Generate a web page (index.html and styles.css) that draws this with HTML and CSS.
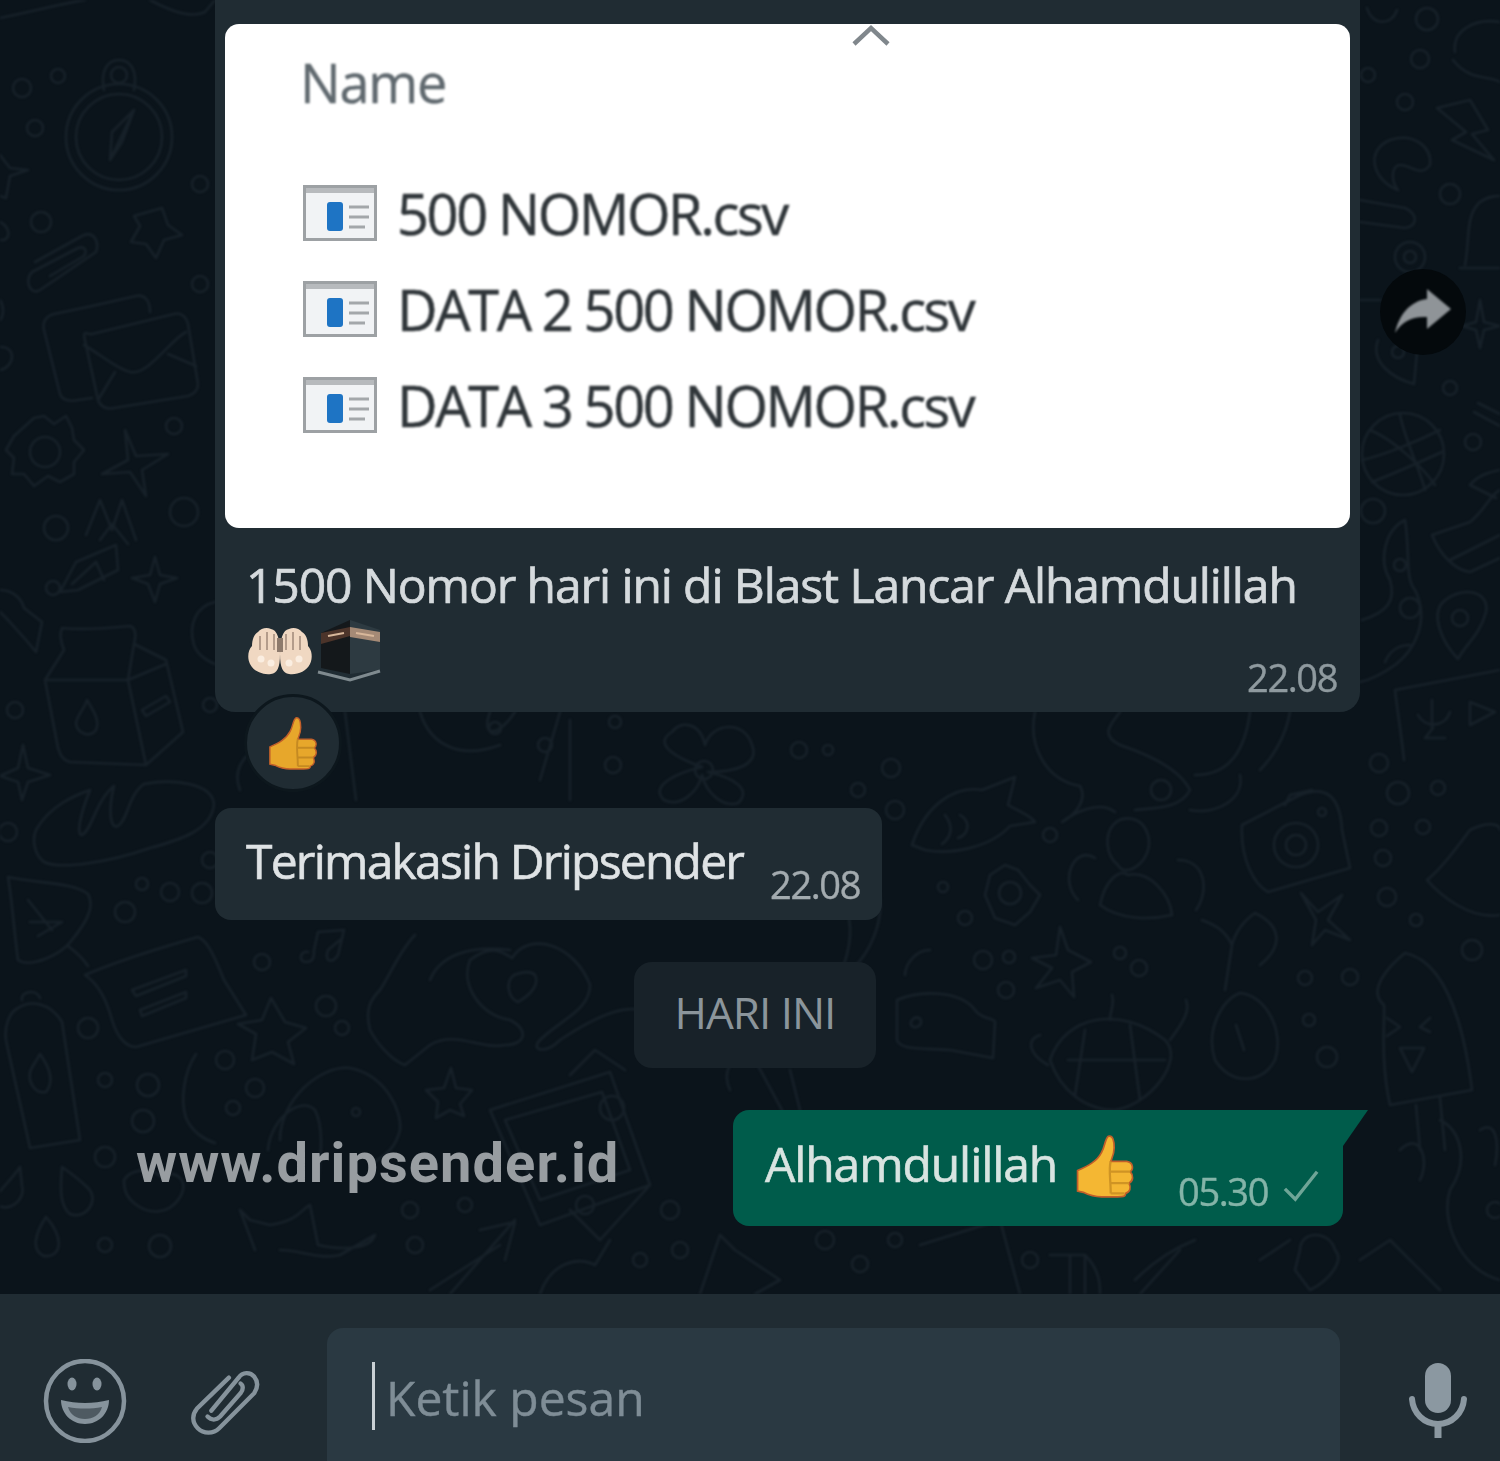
FILE: index.html
```html
<!DOCTYPE html>
<html lang="id">
<head>
<meta charset="utf-8">
<title>Dripsender chat</title>
<link rel="stylesheet" href="styles.css">
</head>
<body>
<div class="page">
  <main class="chat">
    <svg class="wallpaper" viewBox="0 0 1500 1294" width="1500" height="1294" fill="none" stroke="#172129" stroke-width="2.6" stroke-linecap="round" stroke-linejoin="round" aria-hidden="true">
      <!-- left column, top -->
      <path d="M0 18C30 12 60 4 85 0M150 0C165 8 190 20 205 12L215 0"/>
      <circle cx="119" cy="137" r="53"/><circle cx="119" cy="137" r="43"/><path d="M104 90C100 70 108 60 119 60S138 70 134 90"/><circle cx="119" cy="75" r="8"/>
      <path d="M134 110L110 160L112 132ZM134 110L122 142L110 160"/>
      <circle cx="22" cy="88" r="9"/><circle cx="58" cy="76" r="7"/><circle cx="35" cy="128" r="8"/><circle cx="200" cy="184" r="8"/><circle cx="41" cy="222" r="10"/><circle cx="200" cy="284" r="8"/>
      <path d="M0 155L10 168L28 170L10 176L6 198L0 196M0 222C8 226 12 236 4 240L0 240M0 300C4 306 4 316 0 320M0 347C16 346 16 366 0 370"/>
      <path d="M162 208L168 225L182 235L164 240L156 258L146 244L131 242L140 226L134 216Z"/>
      <path d="M35 262L82 236C92 230 100 240 96 252L40 290C30 296 24 280 32 272L78 248C84 246 88 250 84 256L50 276"/>
      <path d="M92 306L54 314C46 316 42 322 44 330L60 394C62 400 70 402 78 400L92 398M92 306L136 296C144 294 150 300 150 312"/>
      <path d="M92 334L174 314C180 312 186 316 188 324L198 384C198 390 194 394 188 396L114 408C106 410 100 406 98 400L84 336C84 330 88 335 92 334ZM84 345C100 354 115 368 130 372C148 376 170 340 186 332M115 372L98 400M168 354L196 366"/>
      <path d="M34 418L44 416L54 424L66 416L72 428L74 440L84 450L74 462L74 474L60 482L48 476L34 486L24 474L12 474L14 458L6 450L14 436Z"/><circle cx="45" cy="452" r="15"/><circle cx="174" cy="426" r="8"/>
      <path d="M125 430L136 456L168 454L142 470L146 496L130 472L102 474L128 460Z"/>
      <circle cx="184" cy="512" r="14"/><path d="M86 535L100 500L112 530L122 500L136 540M100 540L112 524L128 544"/><circle cx="56" cy="528" r="12"/>
      <path d="M60 592L76 562L116 545L118 570L78 590ZM72 584L96 562L104 580"/><circle cx="53" cy="588" r="7"/>
      <path d="M155 557L160 575L177 578L160 584L155 602L148 584L132 578L150 575Z"/>
      <path d="M0 590C14 590 22 600 24 608L42 622L36 652L26 640L8 620L0 612"/>
      <path d="M215 602C196 606 188 625 194 645C198 658 215 664 215 664"/><circle cx="210" cy="705" r="7"/>
      <!-- milk carton -->
      <path d="M62 628C80 630 110 628 130 626C136 628 136 636 134 644L166 660L183 732L146 765L70 762C62 760 60 754 58 748L45 680L64 650C60 640 60 632 62 628Z"/><path d="M45 680H128L134 644M128 680L146 765M128 680L166 664M142 710L166 696L170 702L146 716Z"/>
      <path d="M87 700C94 712 100 720 96 730C90 738 78 734 76 724C76 716 84 710 87 700Z"/><circle cx="15" cy="710" r="8"/>
      <path d="M23 745L28 768L50 775L28 782L22 800L18 782L0 776L18 768Z"/><circle cx="8" cy="832" r="9"/>
      <path d="M36 830C50 805 76 795 90 790C80 815 76 835 82 835C92 830 96 800 114 786C108 810 110 830 118 826C128 820 128 795 144 784C176 778 212 784 214 804C212 830 180 840 150 848C110 862 60 870 44 862C34 854 32 840 36 830Z"/>
      <circle cx="210" cy="860" r="8"/><circle cx="142" cy="884" r="6"/><circle cx="170" cy="892" r="9"/><circle cx="202" cy="893" r="10"/><circle cx="125" cy="912" r="10"/>
      <path d="M8 877C40 884 72 882 88 894C96 908 84 925 72 940C60 956 30 968 18 960C14 930 12 900 8 877ZM28 900L52 930M30 922H60M38 936L62 922M68 946C76 952 84 960 88 966"/>
      <path d="M85 975C120 960 170 945 198 937C206 940 212 950 224 980L246 1015L136 1047C128 1047 118 1040 112 1020C108 1005 100 985 85 975Z"/><path d="M132 990L186 970L186 976L136 996ZM140 1010L186 992L186 998L142 1016Z"/>
      <path d="M22 1000C20 992 36 988 40 998M18 1008C30 1000 50 1002 62 1022L80 1140L30 1148C24 1120 10 1060 6 1040C4 1025 10 1012 18 1008Z"/><path d="M40 1054C50 1068 54 1082 46 1092C36 1094 28 1084 30 1072C32 1066 36 1062 40 1054Z"/>
      <circle cx="88" cy="1028" r="10"/><circle cx="105" cy="1080" r="7"/><circle cx="148" cy="1085" r="11"/><circle cx="143" cy="1121" r="11"/><circle cx="105" cy="1157" r="10"/>
      <path d="M196 1054C184 1072 180 1100 186 1118C192 1132 205 1140 215 1143"/>
      <path d="M20 1167C8 1185 -8 1195 -4 1204C8 1214 26 1200 22 1186ZM62 1167C60 1190 60 1206 70 1214C86 1220 100 1200 88 1188C80 1180 72 1174 62 1167ZM46 1217C36 1232 30 1250 44 1256C60 1258 66 1240 46 1217Z"/>
      <circle cx="105" cy="1245" r="7"/><circle cx="160" cy="1246" r="11"/>
      <path d="M124 1180C130 1170 150 1166 160 1176C176 1168 192 1182 178 1200C168 1214 150 1214 138 1206C126 1198 124 1190 124 1180Z"/>
      <!-- below the first bubble -->
      <path d="M240 790C232 770 244 755 258 748M345 712L356 800M420 712C430 745 460 760 500 745M490 712C480 740 500 735 515 712M560 712L540 780M570 720V800"/>
      <circle cx="495" cy="728" r="6"/><circle cx="545" cy="745" r="7"/><circle cx="615" cy="722" r="6"/><circle cx="613" cy="765" r="8"/>
      <path d="M702 767C682 760 650 745 672 732C680 720 700 722 705 745C712 722 745 720 752 745C760 765 735 772 708 772C735 778 752 790 738 803C722 808 706 792 702 775C698 792 680 808 664 800C648 785 680 772 702 767Z"/><circle cx="704" cy="770" r="9"/>
      <circle cx="799" cy="750" r="8"/><circle cx="828" cy="750" r="5"/><circle cx="891" cy="768" r="9"/><circle cx="858" cy="790" r="7"/><circle cx="895" cy="810" r="9"/><circle cx="1050" cy="835" r="7"/><circle cx="943" cy="887" r="5"/><circle cx="965" cy="918" r="7"/>
      <path d="M912 845C925 805 955 785 982 790L1015 777L1008 805C1020 812 1030 815 1035 822L1010 826C990 848 950 855 925 850ZM945 815C955 828 950 838 942 844M960 815C972 822 968 835 958 838"/>
      <path d="M1035 712C1028 745 1045 780 1080 786C1088 800 1075 815 1062 822C1075 812 1100 800 1115 812M1120 712C1110 725 1100 735 1120 745C1150 755 1180 770 1190 790C1180 810 1150 808 1135 810M1250 712C1245 750 1230 775 1195 775"/>
      <path d="M1240 775C1245 800 1215 815 1190 810"/><circle cx="1161" cy="790" r="10"/>
      <path d="M1290 712C1285 740 1270 760 1260 770"/>
      <circle cx="1379" cy="763" r="9"/><circle cx="1398" cy="793" r="11"/><circle cx="1438" cy="788" r="7"/><circle cx="1379" cy="828" r="8"/><circle cx="1423" cy="827" r="7"/><circle cx="1383" cy="858" r="8"/><circle cx="1387" cy="897" r="9"/><circle cx="1416" cy="920" r="6"/>
      <path d="M1113 825C1122 815 1142 815 1148 835C1155 860 1125 880 1118 865C1105 855 1105 835 1113 825ZM1100 905C1105 880 1120 868 1128 875C1150 870 1170 895 1172 915C1150 920 1120 920 1100 905ZM1078 900C1058 880 1075 845 1095 858M1178 860C1205 860 1210 890 1196 910"/>
      <path d="M1242 825L1300 795C1325 785 1340 795 1342 830L1350 868L1268 892C1255 885 1240 860 1242 825ZM1285 805L1290 795L1312 790"/><circle cx="1296" cy="845" r="22"/><circle cx="1296" cy="845" r="10"/><circle cx="1322" cy="812" r="4"/>
      <path d="M1427 880C1440 870 1455 850 1470 830C1490 820 1500 825 1500 830M1427 880C1440 895 1470 920 1500 915"/>
      <path d="M1005 865L1018 870L1030 885L1040 895L1030 912L1015 925L995 918L985 895L990 875Z"/><circle cx="1010" cy="893" r="11"/>
      <path d="M798 875C840 880 865 915 840 975M875 880C890 915 870 960 840 978" /><path d="M930 950C915 950 905 965 905 975"/>
      <circle cx="983" cy="960" r="9"/><circle cx="1009" cy="957" r="6"/><circle cx="1006" cy="990" r="8"/>
      <path d="M1060 927L1068 950L1091 962L1072 972L1074 997L1060 980L1036 988L1052 968L1032 958L1056 955Z"/><circle cx="1120" cy="953" r="6"/><circle cx="1139" cy="968" r="8"/>
      <path d="M1202 920C1215 925 1225 930 1232 945C1236 930 1245 920 1255 913C1280 925 1285 945 1260 965M1232 945L1225 990"/>
      <path d="M1240 993C1222 1000 1205 1030 1215 1060C1230 1085 1262 1085 1275 1060C1285 1030 1265 995 1240 993ZM1236 1025L1244 1050"/>
      <path d="M1301 893L1318 912L1342 895L1328 920L1350 940L1325 930L1312 945L1316 920Z"/><circle cx="1305" cy="978" r="7"/><circle cx="1350" cy="977" r="8"/><circle cx="1309" cy="1020" r="6"/><circle cx="1327" cy="1057" r="10"/><circle cx="1472" cy="950" r="10"/>
      <path d="M1384 1005C1366 990 1390 965 1405 953C1440 960 1462 1010 1472 1090L1390 1105C1380 1060 1385 1020 1384 1005ZM1416 1105L1420 1150M1440 1098L1445 1150"/><path d="M1387 1018L1400 1027L1387 1036M1430 1018L1420 1027L1430 1032M1400 1048L1424 1048L1412 1072Z"/>
      <path d="M897 1000C920 990 960 990 975 1010C982 1020 995 1018 995 1022L993 1058L950 1050C920 1048 900 1050 897 1040ZM912 1020C916 1015 924 1018 920 1025C914 1030 908 1025 912 1020Z"/>
      <path d="M1050 1060C1065 1015 1120 1005 1165 1040C1185 1060 1150 1105 1115 1110C1085 1110 1060 1090 1050 1060ZM1085 1030L1075 1095M1130 1025L1140 1100M1068 1060H1165M1048 1065C1030 1055 1025 1040 1040 1035M1110 1020C1110 1010 1115 1005 1112 995M1170 1040C1185 1020 1190 1010 1186 1000"/>
      <!-- heart hands -->
      <path d="M514 975C505 982 508 998 518 1002C530 995 540 985 535 975C530 970 522 972 514 975Z"/>
      <path d="M470 960C460 985 480 1015 510 1020C530 1030 525 1045 505 1045C480 1050 455 1030 430 1045L405 1065C390 1060 375 1040 370 1030C365 1010 370 1000 380 990C390 975 400 950 415 935M470 960C490 945 500 950 512 958C530 930 575 945 590 985C590 1010 560 1020 540 1040C530 1050 545 1055 560 1040C590 1020 620 1005 640 1010M430 980C440 955 470 945 510 950"/>
      <path d="M308 952C300 950 298 962 306 962S314 956 314 950L318 932L344 930L338 955C332 964 324 962 328 950L340 940"/><circle cx="262" cy="962" r="8"/>
      <path d="M271 998L285 1022L306 1028L288 1042L294 1064L272 1052L252 1060L256 1034L238 1024L262 1020Z"/><circle cx="326" cy="1006" r="10"/><circle cx="342" cy="1028" r="7"/><circle cx="225" cy="1060" r="9"/><circle cx="255" cy="1088" r="9"/><circle cx="233" cy="1108" r="7"/>
      <path d="M451 1068L456 1088L472 1090L460 1104L464 1116L450 1110L436 1118L438 1102L426 1090L444 1088Z"/>
      <path d="M280 1140C280 1100 320 1065 350 1068C385 1075 402 1110 400 1130C395 1150 385 1155 370 1165M268 1150C270 1120 300 1095 315 1110C325 1130 320 1160 318 1180"/><circle cx="356" cy="1112" r="4"/>
      <path d="M240 1210L250 1220L270 1225C300 1220 300 1210 310 1205L318 1245C340 1250 370 1250 375 1235L340 1255C320 1260 300 1250 280 1250M240 1210L255 1250"/>
      <circle cx="410" cy="1210" r="8"/><circle cx="465" cy="1205" r="7"/><circle cx="415" cy="1245" r="8"/>
      <path d="M490 1110L610 1072L650 1185L540 1225ZM505 1120L602 1092L630 1170L540 1200ZM570 1075L595 1050L625 1070M650 1185L600 1240L570 1210"/><circle cx="612" cy="1108" r="12"/>
      <path d="M500 1245L430 1290M510 1225L515 1220L450 1294M480 1230L515 1222L505 1260"/><circle cx="670" cy="1210" r="9"/><circle cx="680" cy="1250" r="8"/><circle cx="640" cy="1260" r="7"/><circle cx="585" cy="1205" r="9"/>
      <path d="M540 1294C550 1265 575 1255 595 1265L610 1240"/>
      <path d="M730 1090C720 1070 735 1050 755 1060L790 1125M790 1070L800 1110"/>
      <path d="M720 1235L735 1250L780 1280L755 1294M720 1235L700 1294"/>
      <circle cx="860" cy="1264" r="8"/><circle cx="895" cy="1240" r="7"/><circle cx="825" cy="1240" r="9"/>
      <path d="M1050 1255H1085C1100 1270 1100 1285 1100 1294M1070 1255V1294M1085 1255V1294M1135 1280C1150 1265 1170 1250 1195 1240"/>
      <path d="M920 1245L1000 1220L1020 1294M1140 1294L1180 1250M1260 1260L1290 1240"/><circle cx="1030" cy="1260" r="8"/>
      <path d="M1360 1260L1390 1240L1440 1290M1440 1120C1460 1130 1470 1160 1450 1190C1440 1220 1460 1270 1500 1280"/><path d="M1300 1250C1300 1230 1330 1230 1335 1250C1345 1260 1330 1280 1310 1290L1295 1270Z"/>
      <path d="M1400 1150C1420 1130 1430 1160 1420 1180M1480 1130C1495 1120 1500 1140 1495 1165"/><circle cx="1495" cy="1210" r="8"/>
      <!-- right column -->
      <circle cx="1427" cy="19" r="11"/><circle cx="1420" cy="59" r="9"/><circle cx="1368" cy="75" r="7"/><circle cx="1405" cy="102" r="8"/><circle cx="1450" cy="194" r="10"/>
      <path d="M1367 8C1372 26 1392 26 1397 10"/>
      <path d="M1455 52C1452 30 1475 18 1500 22M1453 60C1470 82 1490 75 1500 82"/>
      <path d="M1437 108L1470 100L1488 130L1472 134L1494 160L1452 140L1466 132Z"/>
      <path d="M1398 190C1372 180 1365 150 1390 140C1415 132 1432 148 1430 165C1420 178 1412 165 1400 165C1392 165 1390 180 1398 190Z"/>
      <path d="M1360 200L1405 208C1418 214 1418 226 1405 228L1360 222"/>
      <path d="M1465 265C1470 240 1465 215 1480 202C1490 195 1500 196 1500 196M1460 268H1500"/><circle cx="1410" cy="257" r="15"/><circle cx="1410" cy="257" r="6"/>
      <path d="M1480 300L1484 322L1500 326L1484 330L1480 348L1476 330L1462 326L1476 322Z"/><path d="M1360 300H1380"/>
      <path d="M1378 340C1370 362 1392 378 1414 384L1417 352L1398 335"/><circle cx="1398" cy="352" r="6"/><circle cx="1450" cy="388" r="7"/><path d="M1478 403L1500 414M1474 412L1500 426"/><circle cx="1473" cy="442" r="8"/>
      <circle cx="1403" cy="454" r="41"/>
      <path d="M1370 430C1395 440 1425 470 1435 485M1400 415C1405 440 1420 470 1425 490M1362 460C1385 455 1420 440 1440 430M1372 482C1390 475 1420 462 1442 452"/>
      <circle cx="1373" cy="511" r="12"/>
      <path d="M1432 535C1440 555 1455 570 1470 572L1500 558M1432 535L1470 522C1485 510 1490 495 1500 490M1470 485C1478 475 1490 472 1500 470M1470 485L1496 498M1450 560L1500 535"/>
      <path d="M1405 520C1385 530 1378 560 1390 580C1396 600 1388 612 1362 620M1405 520C1410 550 1405 580 1415 590C1430 620 1415 650 1395 665C1385 672 1370 680 1360 682"/>
      <circle cx="1400" cy="565" r="6"/><circle cx="1410" cy="608" r="10"/><path d="M1385 662C1390 650 1400 645 1410 645"/>
      <path d="M1458 659C1440 640 1432 615 1442 603C1460 585 1490 590 1486 612C1480 635 1465 645 1458 659Z"/><circle cx="1460" cy="618" r="8"/>
      <path d="M1395 690L1500 670M1395 690C1398 715 1402 740 1404 760M1418 715C1425 728 1445 728 1450 712M1432 700V728M1433 728L1425 738H1445M1470 702L1495 712L1470 725Z"/>
    </svg>

    <div class="watermark">www.dripsender.id</div>

    <div class="flow">
      <article class="bubble bubble-media">
        <figure class="shot">
          <svg class="chevron" viewBox="0 0 40 22" width="40" height="22" fill="none" stroke="#80878c" stroke-width="4.5" aria-hidden="true"><path d="M3 20L20 4L37 20"/></svg>
          <div class="shot-head">Name</div>
          <ul class="files">
            <li class="file">
              <svg class="file-icon" viewBox="0 0 74 56" width="74" height="56" aria-hidden="true"><rect x="1.5" y="1.5" width="71" height="53" fill="#f1f3f5" stroke="#9da1a4" stroke-width="3"/><rect x="3" y="3" width="68" height="5" fill="#b7babd"/><rect x="24" y="17" width="16" height="29" rx="3" fill="#1e74c4"/><path d="M46 22H66M46 32H66M46 42H62" stroke="#a3a7aa" stroke-width="3"/></svg>
              <span class="file-name">500 NOMOR.csv</span>
            </li>
            <li class="file">
              <svg class="file-icon" viewBox="0 0 74 56" width="74" height="56" aria-hidden="true"><rect x="1.5" y="1.5" width="71" height="53" fill="#f1f3f5" stroke="#9da1a4" stroke-width="3"/><rect x="3" y="3" width="68" height="5" fill="#b7babd"/><rect x="24" y="17" width="16" height="29" rx="3" fill="#1e74c4"/><path d="M46 22H66M46 32H66M46 42H62" stroke="#a3a7aa" stroke-width="3"/></svg>
              <span class="file-name">DATA 2 500 NOMOR.csv</span>
            </li>
            <li class="file">
              <svg class="file-icon" viewBox="0 0 74 56" width="74" height="56" aria-hidden="true"><rect x="1.5" y="1.5" width="71" height="53" fill="#f1f3f5" stroke="#9da1a4" stroke-width="3"/><rect x="3" y="3" width="68" height="5" fill="#b7babd"/><rect x="24" y="17" width="16" height="29" rx="3" fill="#1e74c4"/><path d="M46 22H66M46 32H66M46 42H62" stroke="#a3a7aa" stroke-width="3"/></svg>
              <span class="file-name">DATA 3 500 NOMOR.csv</span>
            </li>
          </ul>
        </figure>
        <p class="caption">1500 Nomor hari ini di Blast Lancar Alhamdulillah</p>
        <div class="caption-foot">
          <span class="emoji-row">
            <svg viewBox="0 0 66 50" width="66" height="50" aria-hidden="true">
              <path d="M33 28C33 12 30 4 24 3C20 1 14 2 11 6C7 8 5 14 5 20C1 24 0 32 3 38C7 46 16 49 24 48C30 47 33 42 33 28Z" fill="#f0d8c2"/>
              <path d="M33 28C33 12 36 4 42 3C46 1 52 2 55 6C59 8 61 14 61 20C65 24 66 32 63 38C59 46 50 49 42 48C36 47 33 42 33 28Z" fill="#f0d8c2"/>
              <path d="M13 10V24M20 6V24M27 8V24M39 8V24M46 6V24M53 10V24" stroke="#b39c8b" stroke-width="2"/>
              <path d="M30 12H36V26H30Z" fill="#8d7a6c"/>
              <circle cx="14" cy="33" r="3.5" fill="#fbeee1"/><circle cx="24" cy="37" r="3.5" fill="#fbeee1"/><circle cx="42" cy="37" r="3.5" fill="#fbeee1"/><circle cx="52" cy="33" r="3.5" fill="#fbeee1"/>
            </svg>
            <svg viewBox="0 0 66 66" width="66" height="66" aria-hidden="true">
              <path d="M5 15L34 2V56L5 50Z" fill="#14181b"/>
              <path d="M34 2L64 12V52L34 56Z" fill="#2d3a41"/>
              <path d="M5 15L34 9V18L5 26Z" fill="#4c342a"/>
              <path d="M34 9L64 14V24L34 19Z" fill="#a58a76"/>
              <path d="M12 18L28 15M40 15L58 18" stroke="#d8b79a" stroke-width="2"/>
              <path d="M2 54L34 62L64 53" fill="none" stroke="#7f8a8f" stroke-width="3"/>
            </svg>
          </span>
          <time class="stamp">22.08</time>
        </div>
      </article>

      <div class="reaction">
        <svg viewBox="0 0 50 56" width="50" height="54" aria-hidden="true">
          <path d="M28 2C32 1 33 6 33 12C33 18 31 21 30 24L44 24C50 25 50 31 47 33C50 36 50 41 46 43C48 47 47 51 43 52C43 55 40 55 36 55H22C15 55 10 53 6 51L1 50V32C10 28 18 24 22 16C25 11 25 4 28 2Z" fill="#e7a72b" stroke="#c25f2a" stroke-width="1.5"/>
          <path d="M30 33H47M30 43H46M30 52H42M30 24C28 30 30 40 30 52" stroke="#c58a22" stroke-width="2" fill="none"/>
        </svg>
      </div>

      <article class="bubble bubble-text">
        <p class="msg">Terimakasih Dripsender</p>
        <time class="stamp stamp-low">22.08</time>
      </article>

      <div class="day">HARI INI</div>

      <article class="bubble-out">
        <p class="msg msg-out">Alhamdulillah</p>
        <svg class="out-thumb" viewBox="0 0 50 56" width="60" height="64" aria-hidden="true">
          <path d="M28 2C32 1 33 6 33 12C33 18 31 21 30 24L44 24C50 25 50 31 47 33C50 36 50 41 46 43C48 47 47 51 43 52C43 55 40 55 36 55H22C15 55 10 53 6 51L1 50V32C10 28 18 24 22 16C25 11 25 4 28 2Z" fill="#f4b733" stroke="#c25f2a" stroke-width="1.5"/>
          <path d="M30 33H47M30 43H46M30 52H42M30 24C28 30 30 40 30 52" stroke="#cf9424" stroke-width="2" fill="none"/>
        </svg>
        <time class="stamp stamp-out">05.30</time>
        <svg class="tick" viewBox="0 0 38 34" width="36" height="34" fill="none" stroke="#6fa597" stroke-width="3.6" aria-hidden="true"><path d="M2 20L13 31L36 2"/></svg>
      </article>
    </div>

    <div class="forward">
      <svg viewBox="0 0 60 50" width="60" height="50" aria-hidden="true"><path d="M34 2L58 22L34 42V30C20 29 9 34 2 46C6 28 17 14 34 12Z" fill="#8f9498"/></svg>
    </div>
  </main>

  <footer class="composer">
    <svg class="tool-smile" viewBox="0 0 84 84" width="84" height="84" aria-hidden="true">
      <ellipse cx="42" cy="42" rx="39" ry="40" fill="none" stroke="#86939c" stroke-width="4.5"/>
      <ellipse cx="29" cy="25" rx="4.5" ry="6.5" fill="#86939c"/><ellipse cx="54" cy="25" rx="4.5" ry="6.5" fill="#86939c"/>
      <path d="M18 41C34 45 50 45 66 41C66 54 56 65 42 65S18 54 18 41Z" fill="#86939c"/>
      <path d="M25 48C36 50 48 50 59 48C57 56 50 60 42 60S27 56 25 48Z" fill="#202c33" opacity=".55"/>
    </svg>
    <svg class="tool-clip" viewBox="0 0 72 72" width="70" height="70" fill="none" stroke="#86939c" stroke-width="4.5" stroke-linecap="round" aria-hidden="true">
      <path d="M22 46L50 12C54 6 62 6 66 11C70 16 70 22 66 28L30 64C24 70 14 70 8 64C2 58 2 50 7 44L40 12"/>
      <path d="M18 52C22 56 27 56 31 52L52 28C55 24 55 20 52 18"/>
    </svg>
    <div class="field">
      <span class="caret"></span>
      <span class="placeholder">Ketik pesan</span>
    </div>
    <svg class="tool-mic" viewBox="0 0 58 78" width="58" height="78" aria-hidden="true">
      <rect x="16" y="1" width="26" height="50" rx="13" fill="#8b98a1"/>
      <path d="M3 37C4 51 15 62 29 62S54 51 55 37" fill="none" stroke="#8b98a1" stroke-width="6" stroke-linecap="round"/>
      <path d="M29 62V76" stroke="#8b98a1" stroke-width="7"/>
    </svg>
  </footer>
</div>
</body>
</html>
```

FILE: styles.css
```css
* { box-sizing: border-box; }

html, body { margin: 0; padding: 0; background: #0b141a; }

body { font-family: "Open Sans", "Noto Sans", sans-serif; }

p, ul, figure { margin: 0; padding: 0; }

.page {
  display: flex;
  flex-direction: column;
  width: 1500px;
  height: 1461px;
  overflow: hidden;
}

.chat {
  position: relative;
  flex: 0 0 1294px;
  background: #0b141b;
  overflow: hidden;
}

.wallpaper { position: absolute; inset: 0; filter: blur(.9px); }

.watermark {
  position: absolute;
  left: 136px;
  top: 1131px;
  font: 700 56px/64px Roboto, "Liberation Sans", sans-serif;
  letter-spacing: 1.05px;
  color: #989da1;
  filter: blur(.5px);
}

.flow {
  position: relative;
  display: flex;
  flex-direction: column;
  align-items: flex-start;
  padding-left: 215px;
}

.bubble { background: #202c33; border-radius: 16px; }

.bubble-media {
  width: 1145px;
  height: 712px;
  padding: 24px 10px 0;
  border-radius: 0 0 20px 20px;
}

.shot {
  position: relative;
  height: 504px;
  padding: 26px 0 0 75px;
  background: #fff;
  border-radius: 14px;
  overflow: hidden;
}

.chevron { position: absolute; left: 626px; top: 0; filter: blur(.5px); }

.shot-head {
  font-size: 54px;
  line-height: 64px;
  letter-spacing: -1.2px;
  color: #5f686e;
  -webkit-text-stroke: .4px currentColor;
  filter: blur(.8px);
}

.files {
  display: flex;
  flex-direction: column;
  gap: 40px;
  margin-top: 71px;
  padding-left: 3px;
  list-style: none;
}

.file { display: flex; align-items: center; gap: 20px; height: 56px; }

.file-icon { filter: blur(.6px); }

.file-name {
  font-size: 56px;
  line-height: 56px;
  letter-spacing: -2.4px;
  color: #2f3539;
  -webkit-text-stroke: .5px currentColor;
  filter: blur(.8px);
}

.caption {
  padding: 27px 0 0 21px;
  font-size: 48px;
  line-height: 60px;
  letter-spacing: -1.1px;
  color: #d5dadd;
  white-space: nowrap;
  -webkit-text-stroke: .7px currentColor;
  filter: blur(.7px);
}

.caption-foot {
  display: flex;
  justify-content: space-between;
  align-items: flex-start;
  padding: 0 13px 0 22px;
}

.emoji-row { display: flex; align-items: center; gap: 3px; margin-top: 3px; filter: blur(.5px); }

.stamp {
  font-size: 38px;
  line-height: 48px;
  letter-spacing: -1.4px;
  color: #8f9a9f;
  white-space: nowrap;
  -webkit-text-stroke: .4px currentColor;
  filter: blur(.7px);
}

.caption-foot .stamp { margin-top: 38px; }

.reaction {
  position: relative;
  display: flex;
  align-items: center;
  justify-content: center;
  width: 98px;
  height: 98px;
  margin: -18px 0 0 29px;
  background: #202c33;
  border: 3px solid #0d171d;
  border-radius: 50%;
}

.reaction svg, .out-thumb { filter: blur(.5px); }

.bubble-text {
  display: flex;
  align-items: flex-end;
  width: 667px;
  height: 112px;
  margin-top: 16px;
  padding: 0 22px 12px 31px;
  justify-content: space-between;
}

.msg {
  font-size: 48px;
  line-height: 60px;
  letter-spacing: -1.77px;
  color: #dfe3e5;
  white-space: nowrap;
  -webkit-text-stroke: .6px currentColor;
  filter: blur(.7px);
}

.bubble-text .msg { margin-bottom: 17px; }

.stamp-low { color: #a3abaf; }

.day {
  width: 242px;
  height: 106px;
  margin: 42px 0 0 419px;
  padding-top: 20px;
  background: #182229;
  border-radius: 18px;
  font-size: 44px;
  line-height: 60px;
  text-align: center;
  letter-spacing: -1px;
  color: #8b959b;
}

.bubble-out {
  position: relative;
  display: flex;
  align-items: flex-start;
  width: 610px;
  height: 116px;
  margin: 42px 0 0 518px;
  padding: 24px 0 0 32px;
  background: #005c4b;
  border-radius: 16px 0 16px 16px;
}

.bubble-out::after {
  content: "";
  position: absolute;
  left: 100%;
  top: 0;
  width: 25px;
  height: 36px;
  background: #005c4b;
  clip-path: polygon(0 0, 100% 0, 0 100%);
}

.msg-out { letter-spacing: -1.1px; color: #d8e4e1; }

.out-thumb { margin: 0 0 0 18px; flex: none; }

.stamp-out { margin: 33px 0 0 43px; color: #84b4a8; }

.tick { margin: 35px 0 0 15px; flex: none; filter: blur(.5px); }

.forward {
  position: absolute;
  left: 1380px;
  top: 269px;
  display: flex;
  align-items: center;
  justify-content: center;
  width: 86px;
  height: 86px;
  background: #04090c;
  border-radius: 50%;
}

.forward svg { filter: blur(1px); }

.composer {
  flex: 1;
  display: flex;
  align-items: flex-start;
  background: #202c33;
  padding: 34px 0 0 43px;
}

.tool-smile { flex: none; margin-top: 31px; filter: blur(.6px); }

.tool-clip { flex: none; margin: 38px 0 0 63px; filter: blur(.6px); }

.field {
  flex: none;
  display: flex;
  align-items: flex-start;
  width: 1013px;
  height: 133px;
  margin-left: 67px;
  padding: 34px 0 0 45px;
  background: #2a3942;
  border-radius: 16px 16px 0 0;
}

.caret { flex: none; width: 3px; height: 68px; background: #c9d0d4; }

.placeholder {
  margin-left: 11px;
  margin-top: 2px;
  font-size: 48px;
  line-height: 68px;
  color: #7f8d96;
  -webkit-text-stroke: .4px currentColor;
  filter: blur(.7px);
}

.tool-mic { flex: none; margin: 34px 0 0 69px; filter: blur(.6px); }
```
